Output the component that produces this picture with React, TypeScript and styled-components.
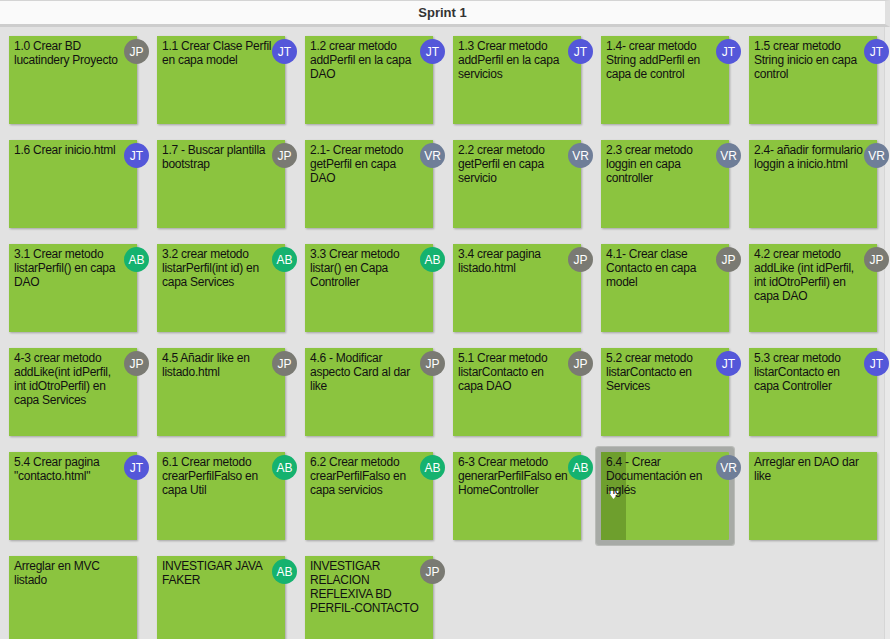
import React from "react";
import styled, { createGlobalStyle } from "styled-components";

const Global = createGlobalStyle`
  html, body { margin: 0; padding: 0; overflow: hidden; background: #e2e2e2; }
  body { width: 890px; height: 639px; }
`;

type Who = "JP" | "JT" | "VR" | "AB" | "";

const AVATAR_COLORS: Record<string, string> = {
  JP: "#7a7a73",
  JT: "#5457d9",
  VR: "#6f7e98",
  AB: "#15b26f",
};

const tasks: { text: string; who: Who; selected?: boolean }[] = [
  { text: "1.0 Crear BD lucatindery Proyecto", who: "JP" },
  { text: "1.1 Crear Clase Perfil en capa model", who: "JT" },
  { text: "1.2 crear metodo addPerfil en la capa DAO", who: "JT" },
  { text: "1.3 Crear metodo addPerfil en la capa servicios", who: "JT" },
  { text: "1.4- crear metodo String addPerfil en capa de control", who: "JT" },
  { text: "1.5 crear metodo String inicio en capa control", who: "JT" },
  { text: "1.6 Crear inicio.html", who: "JT" },
  { text: "1.7 - Buscar plantilla bootstrap", who: "JP" },
  { text: "2.1- Crear metodo getPerfil en capa DAO", who: "VR" },
  { text: "2.2 crear metodo getPerfil en capa servicio", who: "VR" },
  { text: "2.3 crear metodo loggin en capa controller", who: "VR" },
  { text: "2.4- añadir formulario loggin a inicio.html", who: "VR" },
  { text: "3.1 Crear metodo listarPerfil() en capa DAO", who: "AB" },
  { text: "3.2 crear metodo listarPerfil(int id) en capa Services", who: "AB" },
  { text: "3.3 Crear metodo listar() en Capa Controller", who: "AB" },
  { text: "3.4 crear pagina listado.html", who: "JP" },
  { text: "4.1- Crear clase Contacto en capa model", who: "JP" },
  { text: "4.2 crear metodo addLike (int idPerfil, int idOtroPerfil) en capa DAO", who: "JP" },
  { text: "4-3 crear metodo addLike(int idPerfil, int idOtroPerfil) en capa Services", who: "JP" },
  { text: "4.5 Añadir like en listado.html", who: "JP" },
  { text: "4.6 - Modificar aspecto Card al dar like", who: "JP" },
  { text: "5.1 Crear metodo listarContacto en capa DAO", who: "JP" },
  { text: "5.2 crear metodo listarContacto en Services", who: "JT" },
  { text: "5.3 crear metodo listarContacto en capa Controller", who: "JT" },
  { text: "5.4 Crear pagina \"contacto.html\"", who: "JT" },
  { text: "6.1 Crear metodo crearPerfilFalso en capa Util", who: "AB" },
  { text: "6.2 Crear metodo crearPerfilFalso en capa servicios", who: "AB" },
  { text: "6-3 Crear metodo generarPerfilFalso en HomeController", who: "AB" },
  { text: "6.4 - Crear Documentación en inglés", who: "VR", selected: true },
  { text: "Arreglar en DAO dar like", who: "" },
  { text: "Arreglar en MVC listado", who: "" },
  { text: "INVESTIGAR JAVA FAKER", who: "AB" },
  { text: "INVESTIGAR RELACION REFLEXIVA BD PERFIL-CONTACTO", who: "JP" },
];

const Board = styled.div`
  width: 890px;
  height: 639px;
  box-sizing: border-box;
  display: flex;
  flex-direction: column;
  background: #e2e2e2;
  font-family: "Liberation Sans", Arial, sans-serif;
  overflow: hidden;
`;

const Header = styled.div`
  height: 27px;
  flex: none;
  box-sizing: border-box;
  display: flex;
  align-items: center;
  justify-content: center;
  background: #fafafa;
  border-top: 1px solid #d4d4d4;
  border-bottom: 3px solid #cdcdcd;
  border-right: 5px solid #e0e0e0;
  font-weight: bold;
  font-size: 13px;
  color: #333;
`;

const Body = styled.div`
  flex: 1;
  display: flex;
`;

const Grid = styled.div`
  flex: 1;
  display: grid;
  grid-template-columns: repeat(6, 128px);
  grid-auto-rows: 88px;
  column-gap: 20px;
  row-gap: 16px;
  padding: 9px 0 0 9px;
  align-content: start;
`;

const RightEdge = styled.div`
  width: 5px;
  flex: none;
  border-left: 1px solid #d6d6d6;
  background: #e9e9e9;
`;

const Card = styled.div<{ $selected?: boolean }>`
  position: relative;
  background: #8bc43f;
  box-shadow: ${(p) =>
    p.$selected
      ? "0 0 0 5px #a7aaa6, 0 0 0 6px #b9bbb8"
      : "1px 1px 2px rgba(0,0,0,0.28)"};
  border-radius: ${(p) => (p.$selected ? "1px" : "0")};
`;

const Strip = styled.div`
  position: absolute;
  left: 0;
  top: 0;
  bottom: 0;
  width: 25px;
  background: #6e9f2d;
`;

const Chevron = styled.svg`
  position: absolute;
  left: 7px;
  top: 39px;
`;

const Title = styled.div`
  position: relative;
  padding: 3px 13.5px 0 5px;
  font-size: 12px;
  line-height: 14px;
  letter-spacing: -0.25px;
  color: #111;
`;

const Avatar = styled.div<{ $bg: string }>`
  position: absolute;
  left: 115px;
  top: 3px;
  width: 25px;
  height: 25px;
  border-radius: 50%;
  background: ${(p) => p.$bg};
  color: #fff;
  font-size: 12px;
  display: flex;
  align-items: center;
  justify-content: center;
  z-index: 3;
`;

export default function App() {
  return (
    <>
      <Global />
      <Board>
        <Header>Sprint 1</Header>
        <Body>
          <Grid>
            {tasks.map((t, i) => (
              <Card key={i} $selected={t.selected}>
                {t.selected && (
                  <>
                    <Strip />
                    <Chevron width="11" height="8" viewBox="0 0 11 8">
                      <path d="M0.5 1 Q0.5 0 1.5 0 H9.5 Q10.5 0 10.5 1 L6 7.5 Q5.5 8 5 7.5 Z" fill="#fff" />
                    </Chevron>
                  </>
                )}
                <Title>{t.text}</Title>
                {t.who && <Avatar $bg={AVATAR_COLORS[t.who]}>{t.who}</Avatar>}
              </Card>
            ))}
          </Grid>
          <RightEdge />
        </Body>
      </Board>
    </>
  );
}
